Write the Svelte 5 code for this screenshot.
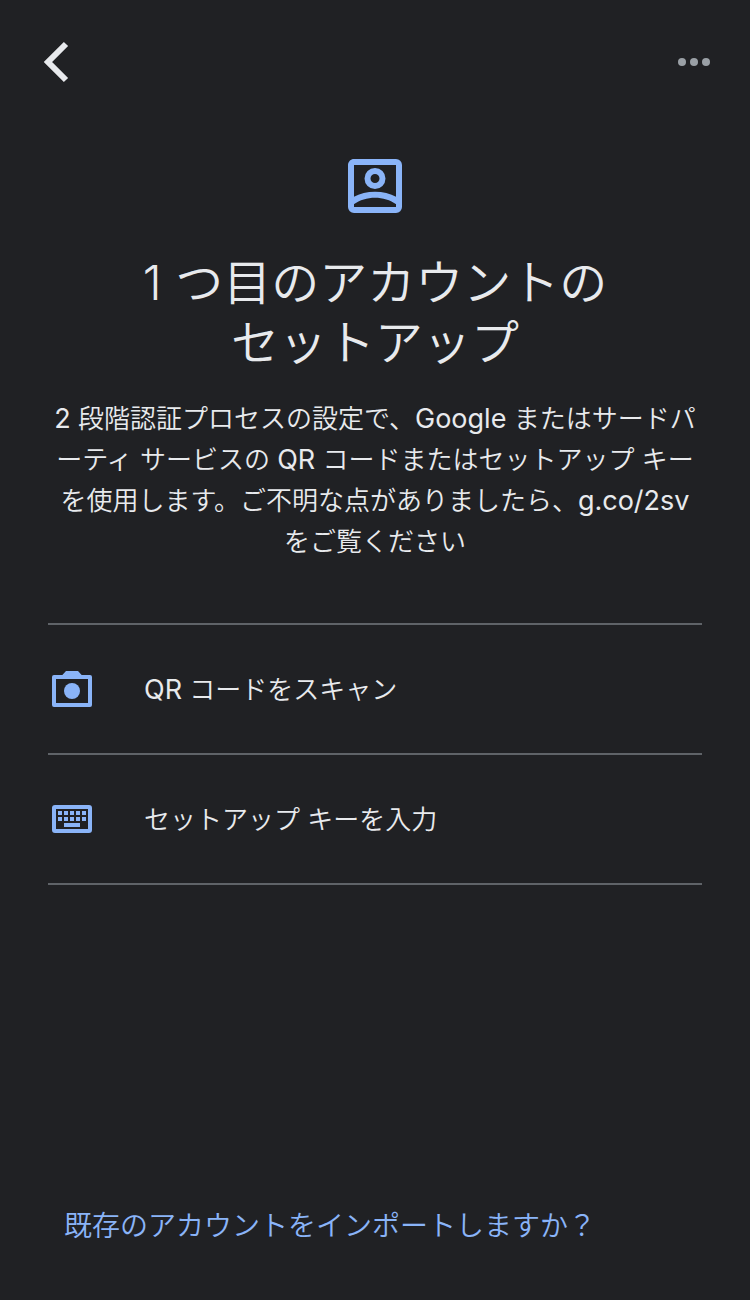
<script lang="ts">
    type SetupMethod = {
        id: "scan" | "key";
        latin?: string;
        label: string;
    };

    const methods: SetupMethod[] = [
        { id: "scan", latin: "QR", label: " コードをスキャン" },
        { id: "key", label: "セットアップ キーを入力" },
    ];

    const keyColumns = [5, 8, 11, 14, 17];
    const keyRows = [8, 11];
</script>

<div class="screen">
    <header class="top-bar">
        <button type="button" class="icon-button" aria-label="戻る">
            <svg width="32" height="48" viewBox="0 0 32 48" aria-hidden="true">
                <path
                    d="M26 6 8 24l18 18"
                    fill="none"
                    stroke="currentColor"
                    stroke-width="6"
                />
            </svg>
        </button>
        <button type="button" class="icon-button more" aria-label="その他">
            <svg width="32" height="8" viewBox="0 0 32 8" aria-hidden="true">
                <circle cx="4" cy="4" r="4" />
                <circle cx="16" cy="4" r="4" />
                <circle cx="28" cy="4" r="4" />
            </svg>
        </button>
    </header>

    <main>
        <svg
            class="hero-icon"
            width="72"
            height="72"
            viewBox="0 0 24 24"
            aria-hidden="true"
        >
            <path
                fill-rule="evenodd"
                d="M5 3h14a2 2 0 0 1 2 2v14a2 2 0 0 1-2 2H5a2 2 0 0 1-2-2V5c0-1.1.9-2 2-2zm0 2v14h14V5z"
            />
            <path
                fill-rule="evenodd"
                d="M12 6a3.5 3.5 0 1 0 0 7 3.5 3.5 0 0 0 0-7zm0 2a1.5 1.5 0 1 1 0 3 1.5 1.5 0 0 1 0-3z"
            />
            <path
                d="M4.8 15.7C7 14.5 9.4 13.9 12 13.9s5 .6 7.2 1.8v2.5c-2.2-1.6-4.6-2.3-7.2-2.3s-5 .7-7.2 2.3z"
            />
        </svg>

        <h1>1 つ目のアカウントの<br />セットアップ</h1>

        <p>
            <span class="latin">2</span> 段階認証プロセスの設定で、<span
                class="latin">Google</span
            > またはサードパ<br />ーティ サービスの <span class="latin"
                >QR</span
            > コードまたはセットアップ キー<br
            />を使用します。ご不明な点がありましたら、<span class="latin"
                >g.co/2sv</span
            ><br />をご覧ください
        </p>

        <ul class="methods">
            {#each methods as method (method.id)}
                <li>
                    <button type="button" class="method">
                        <svg
                            width="48"
                            height="48"
                            viewBox="0 0 24 24"
                            aria-hidden="true"
                        >
                            {#if method.id === "scan"}
                                <path
                                    fill-rule="evenodd"
                                    d="M9 3h6l1.83 2H21a1 1 0 0 1 1 1v14a1 1 0 0 1-1 1H3a1 1 0 0 1-1-1V6a1 1 0 0 1 1-1h4.17zM4 7v12h16V7z"
                                />
                                <circle cx="12" cy="13" r="4" />
                            {:else}
                                <path
                                    fill-rule="evenodd"
                                    d="M3.5 5h17A1.5 1.5 0 0 1 22 6.5v11a1.5 1.5 0 0 1-1.5 1.5h-17A1.5 1.5 0 0 1 2 17.5v-11A1.5 1.5 0 0 1 3.5 5zM4 7v10h16V7z"
                                />
                                {#each keyRows as y}
                                    {#each keyColumns as x}
                                        <rect {x} {y} width="2" height="2" />
                                    {/each}
                                {/each}
                                <rect x="8" y="14" width="8" height="2" />
                            {/if}
                        </svg>
                        <span class="method-label">
                            {#if method.latin}<span class="latin"
                                    >{method.latin}</span
                                >{/if}{method.label}
                        </span>
                    </button>
                </li>
            {/each}
        </ul>
    </main>

    <footer>
        <button type="button" class="import">
            既存のアカウントをインポートしますか&#xFF1F;
        </button>
    </footer>
</div>

<style>
    :global(body) {
        margin: 0;
        background: #202124;
    }

    .screen {
        box-sizing: border-box;
        min-height: 100vh;
        display: flex;
        flex-direction: column;
        background: #202124;
        color: #e8eaed;
        font-family: Inter, "Noto Sans CJK JP", sans-serif;
        font-size: 26px;
        font-weight: 350;
    }

    button {
        border: 0;
        padding: 0;
        background: transparent;
        color: inherit;
        font: inherit;
        cursor: pointer;
    }

    svg {
        display: block;
        flex: none;
        fill: currentColor;
    }

    .latin {
        font-size: 27px;
        font-weight: 400;
    }

    .top-bar {
        display: flex;
        align-items: center;
        justify-content: space-between;
        padding: 38px 40px 0;
    }

    .icon-button {
        display: flex;
        align-items: center;
        height: 48px;
    }

    .more {
        color: #9aa0a6;
    }

    main {
        padding: 64px 48px 0;
    }

    .hero-icon {
        margin: 0 auto;
        color: #8ab4f8;
    }

    h1 {
        margin: 31px 0 0;
        font-size: 48px;
        font-weight: 350;
        line-height: 60px;
        text-align: center;
    }

    p {
        margin: 25px -8px 0;
        line-height: 41px;
        text-align: center;
    }

    .methods {
        margin: 61px 0 0;
        padding: 0;
        list-style: none;
        border-top: 2px solid #5f6368;
    }

    .methods li {
        border-bottom: 2px solid #5f6368;
    }

    .method {
        display: flex;
        align-items: center;
        gap: 48px;
        width: 100%;
        height: 128px;
        text-align: left;
    }

    .method svg {
        color: #8ab4f8;
    }

    .method-label {
        padding-bottom: 4px;
    }

    footer {
        margin-top: auto;
        padding: 48px 64px;
    }

    .import {
        color: #8ab4f8;
        font-size: 28px;
        line-height: 52px;
        text-align: left;
    }
</style>
